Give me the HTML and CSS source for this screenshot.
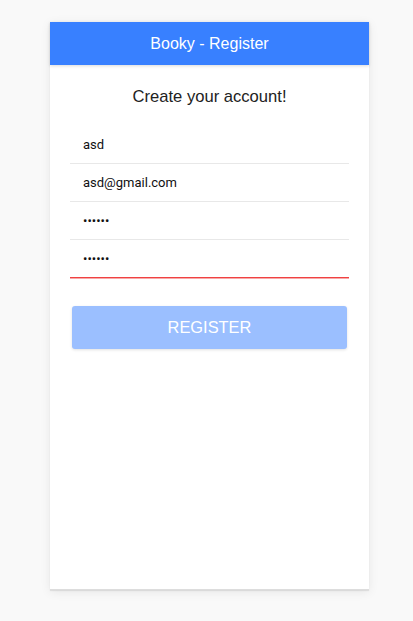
FILE: index.html
```html
<!DOCTYPE html>
<html>
<head>
<meta charset="utf-8">
<link rel="stylesheet" href="styles.css">
</head>
<body>
<div class="card">
  <div class="header">Booky - Register</div>
  <div class="content">
    <h1 class="title">Create your account!</h1>
    <div class="fields">
      <div class="field"><input class="input" type="text" value="asd"></div>
      <div class="field"><input class="input" type="text" value="asd@gmail.com"></div>
      <div class="field"><input class="input" type="password" value="123456"></div>
      <div class="field field-invalid"><input class="input" type="password" value="123456"></div>
    </div>
    <button class="btn">REGISTER</button>
  </div>
</div>
</body>
</html>
```
FILE: styles.css
```css
html, body {
  margin: 0;
  padding: 0;
  background: #f9f9f9;
  font-family: "Liberation Sans", Arial, sans-serif;
}
body {
  display: flex;
  justify-content: flex-start;
  padding: 22px 0 0 50px;
  height: 621px;
  box-sizing: border-box;
}
.card {
  width: 319px;
  height: 568px;
  background: #fff;
  box-shadow: 0 2px 10px rgba(0,0,0,0.08), 0 1px 1px rgba(0,0,0,0.08);
  border-bottom: 1px solid #ddd;
  display: flex;
  flex-direction: column;
  box-sizing: border-box;
}
.header {
  height: 43px;
  background: #3880ff;
  color: #fff;
  font-size: 16px;
  display: flex;
  align-items: center;
  justify-content: center;
  box-shadow: 0 1px 3px rgba(0,0,0,0.15);
}
.content {
  padding: 0 20px;
  display: flex;
  flex-direction: column;
}
.title {
  margin: 21px 0 0;
  font-weight: normal;
  font-size: 16.6px;
  color: #222;
  text-align: center;
  line-height: 22px;
}
.fields {
  margin-top: 18px;
  display: flex;
  flex-direction: column;
}
.field {
  height: 38px;
  border-bottom: 1px solid #e8e8e8;
  box-sizing: border-box;
  display: flex;
  align-items: center;
}
.field.field-invalid {
  border-bottom-color: #f04141;
  box-shadow: 0 1px 0 rgba(240, 65, 65, 0.45);
}
.input {
  border: none;
  outline: none;
  background: transparent;
  font-family: Roboto, "Liberation Sans", sans-serif;
  font-size: 13px;
  color: #111;
  padding: 0 0 0 13px;
  width: 100%;
  height: 100%;
}
.btn {
  margin: 28px 2px 0;
  height: 43px;
  border: none;
  border-radius: 3px;
  background: #9bbfff;
  color: #fff;
  font-family: "Liberation Sans", Arial, sans-serif;
  font-size: 16.4px;
  box-shadow: 0 1px 3px rgba(0,0,0,0.12);
}
```
